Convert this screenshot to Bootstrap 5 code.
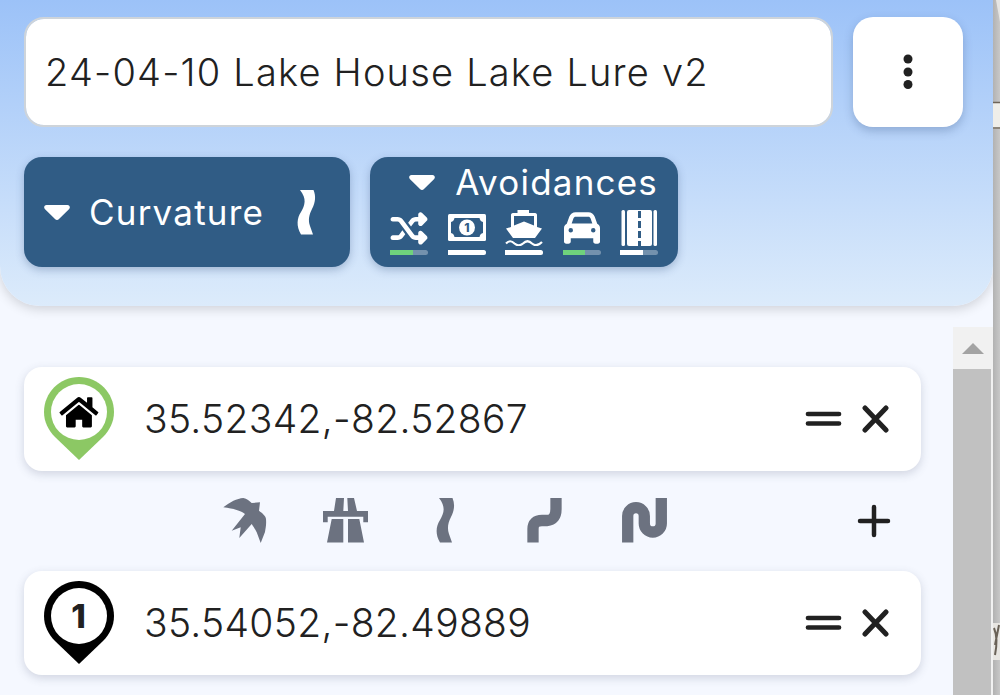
<!DOCTYPE html>
<html lang="en">
<head>
<meta charset="utf-8">
<title>Route planner</title>
<link rel="stylesheet" href="https://cdn.jsdelivr.net/npm/bootstrap@5.3.0/dist/css/bootstrap.min.css">
<script src="https://cdn.jsdelivr.net/npm/bootstrap@5.3.0/dist/js/bootstrap.bundle.min.js"></script>
<style>
html,body{height:695px;overflow:hidden;background:#c4c4c4;}
body{font-family:"Inter","Liberation Sans",sans-serif;color:#212121;}
.shell{height:695px;}
.sidepanel{width:993px;height:695px;background:#f5f8ff;flex:none;}
.mapstrip{width:7px;height:695px;flex:none;display:block;}
.headbox{height:306px;flex:none;padding:17px 30px 0 24px;background:linear-gradient(180deg,#9cc2f8 0%,#dcebfb 100%);border-radius:0 0 40px 40px;box-shadow:0 3px 12px rgba(0,0,0,.16);}
.headrow{column-gap:20px;}
.headrow + .headrow{margin-top:30px;}
.titlefield.form-control{height:110px;flex:1 1 auto;width:auto;min-width:0;border:2px solid #ced4da;border-radius:20px;font-size:38px;letter-spacing:1.2px;padding:0 19px;color:#212121;font-weight:300;}
.kebabbtn.btn{width:110px;height:110px;flex:none;background:#fff;border:0;border-radius:20px;box-shadow:0 4px 10px rgba(40,70,120,.28);padding:0;}
.routebtn.btn{height:110px;background:#305c85;color:#fff;border:0;border-radius:18px;box-shadow:0 3px 8px rgba(40,70,120,.3);padding:0;font-size:35px;font-weight:400;letter-spacing:1.2px;}
.curvebtn.btn{width:326px;padding:0 20px;}
.curvelabel{margin-left:19px;}
.curveglyph{margin-right:14px;}
.avoidbtn.btn{width:308px;padding:9px 20px 0;line-height:32px;}
.avoidlabel{margin-left:20px;}
.avoidrow{margin-top:12px;}
.avoidcell{width:38px;}
.meter.progress{height:5px;background:#7391ad;border-radius:0 3px 3px 0;margin-top:4px;}
.meter .progress-bar{background:#fff;}
.meter .progress-bar.okbar{background:#6fd27c;}
.scrollwrap{min-height:0;}
.legs{padding:61px 32px 0 24px;width:953px;flex:none;}
.pointcard.card{height:104px;border:0;border-radius:18px;box-shadow:0 3px 10px rgba(60,70,100,.2);padding:10px 32px 0 20px;}
.coordtext{font-size:39px;line-height:84px;margin-left:30px;font-weight:300;letter-spacing:.3px;}
.rowtools{margin-top:26px;}
.legrow{height:100px;padding-left:171px;}
.legbtn{width:100px;}
.addglyph{margin-right:30px;}
.fakebar{width:40px;margin-top:21px;background:#f1f1f1;flex:none;}
.fakebar-up{height:42px;}
.fakebar-thumb{flex:1 1 auto;background:#c1c1c1;margin-right:2px;}
</style>
</head>
<body>
<div class="shell d-flex">
  <div class="sidepanel d-flex flex-column">
    <header class="headbox">
      <div class="headrow d-flex">
        <input class="titlefield form-control" type="text" value="24-04-10 Lake House Lake Lure v2" aria-label="Route name">
        <button class="kebabbtn btn d-flex align-items-center justify-content-center" type="button" aria-label="Menu">
          <svg width="10" height="36" viewBox="0 0 10 36" fill="#212121"><circle cx="5" cy="5" r="4.5"/><circle cx="5" cy="18" r="4.5"/><circle cx="5" cy="30.5" r="4.5"/></svg>
        </button>
      </div>
      <div class="headrow d-flex">
        <button class="routebtn curvebtn btn d-flex align-items-center" type="button">
          <svg width="26" height="15" viewBox="0 0 26 15" fill="#fff"><path d="M2.5 0H23.5C25.6 0 26.6 2.4 25.2 3.9L15 14C13.9 15.2 12.1 15.2 11 14L.8 3.9C-.6 2.4.4 0 2.5 0Z"/></svg>
          <span class="curvelabel">Curvature</span>
          <svg class="curveglyph ms-auto" width="20" height="45" viewBox="13 0 20 45" fill="#fff"><path d="M17 0H30.5C33 6 32.5 12 29 19C26 25 25 30 27 36L30 44.5H18C13 36 14 28 18 22C22 15 24 9 17 0Z"/></svg>
        </button>
        <button class="routebtn avoidbtn btn d-flex flex-column" type="button">
          <span class="d-flex align-items-center justify-content-end w-100">
            <svg width="26" height="15" viewBox="0 0 26 15" fill="#fff"><path d="M2.5 0H23.5C25.6 0 26.6 2.4 25.2 3.9L15 14C13.9 15.2 12.1 15.2 11 14L.8 3.9C-.6 2.4.4 0 2.5 0Z"/></svg>
            <span class="avoidlabel">Avoidances</span>
          </span>
          <span class="avoidrow d-flex justify-content-between w-100">
            <span class="avoidcell d-block">
              <svg class="d-block" width="38" height="36" viewBox="0 0 512 500" fill="#fff"><path d="M403.8 34.4c12-5 25.7-2.2 34.9 6.9l64 64c6 6 9.4 14.1 9.4 22.6s-3.4 16.6-9.4 22.6l-64 64c-9.2 9.2-22.9 11.9-34.9 6.9s-19.8-16.6-19.8-29.6V160H352c-10.1 0-19.6 4.7-25.6 12.8L284 229.3 244 176l31.2-41.6C293.3 110.2 321.8 96 352 96h32V64c0-12.9 7.8-24.6 19.8-29.6zM164 282.7L204 336l-31.2 41.6C154.7 401.8 126.2 416 96 416H32c-17.7 0-32-14.3-32-32s14.3-32 32-32H96c10.1 0 19.6-4.7 25.6-12.8L164 282.7zm274.6 188c-9.2 9.2-22.9 11.9-34.9 6.9s-19.8-16.6-19.8-29.6V416H352c-30.2 0-58.7-14.2-76.8-38.4L121.6 172.8c-6-8.1-15.5-12.8-25.6-12.8H32c-17.7 0-32-14.3-32-32s14.3-32 32-32H96c30.2 0 58.7 14.2 76.8 38.4L326.4 339.2c6 8.1 15.5 12.8 25.6 12.8h32V320c0-12.9 7.8-24.6 19.8-29.6s25.7-2.2 34.9 6.9l64 64c6 6 9.4 14.1 9.4 22.6s-3.4 16.6-9.4 22.6l-64 64z"/></svg>
              <span class="meter progress d-flex"><span class="progress-bar okbar" style="width:60%"></span></span>
            </span>
            <span class="avoidcell d-block">
              <svg class="d-block" width="38" height="36" viewBox="0 0 38 36"><rect x="0" y="4" width="38" height="27" rx="1.5" fill="#fff"/><path fill="#305c85" d="M6.5 8H31.5C32 10.5 33 11.5 35 12V23C33 23.5 32 24.5 31.5 27H6.5C6 24.5 5 23.5 3 23V12C5 11.5 6 10.5 6.5 8Z"/><circle cx="19" cy="17.5" r="8" fill="#fff"/><text x="19" y="22" text-anchor="middle" font-size="12" font-weight="800" fill="#305c85" font-family="Inter,sans-serif" letter-spacing="0">1</text></svg>
              <span class="meter progress d-flex"><span class="progress-bar" style="width:100%"></span></span>
            </span>
            <span class="avoidcell d-block">
              <svg class="d-block" width="38" height="36" viewBox="0 0 38 36"><path fill="#fff" d="M12.5 0H24V3H30C31.5 3 32 4 32 5V17L37 18.5L30 28H8L1 18.5L6 17V5C6 4 6.5 3 8 3H12.5Z"/><path fill="#305c85" d="M9 6H29V15.5L19 11.5L9 15.5Z"/><path d="M1 33.5C4 30.5 6.5 30.5 9.5 33.5C12.5 36 15 36 18 33.5C21 30.5 24 30.5 27 33.5C30 36 33 36 37 32" fill="none" stroke="#fff" stroke-width="2.2"/></svg>
              <span class="meter progress d-flex"><span class="progress-bar" style="width:100%"></span></span>
            </span>
            <span class="avoidcell d-block">
              <svg class="d-block" width="38" height="36" viewBox="-14 0 540 512" fill="#fff"><path d="M135.2 117.4L109.1 192H402.9l-26.1-74.6C372.3 104.6 360.2 96 346.6 96H165.4c-13.6 0-25.7 8.6-30.2 21.4zM39.6 196.8L74.8 96.3C88.3 57.8 124.6 32 165.4 32H346.6c40.8 0 77.1 25.8 90.6 64.3l35.2 100.5c23.2 9.6 39.6 32.5 39.6 59.2V400v48c0 17.7-14.3 32-32 32H448c-17.7 0-32-14.3-32-32V400H96v48c0 17.7-14.3 32-32 32H32c-17.7 0-32-14.3-32-32V400 256c0-26.7 16.4-49.6 39.6-59.2zM128 288a32 32 0 1 0 -64 0 32 32 0 1 0 64 0zm288 32a32 32 0 1 0 0-64 32 32 0 1 0 0 64z"/></svg>
              <span class="meter progress d-flex"><span class="progress-bar okbar" style="width:60%"></span></span>
            </span>
            <span class="avoidcell d-block">
              <svg class="d-block" width="38" height="36" viewBox="0 0 38 36"><rect x="1.5" y="0" width="3.5" height="36" rx="1.5" fill="#fff"/><rect x="33.5" y="0" width="3.5" height="36" rx="1.5" fill="#fff"/><rect x="7" y="0" width="25" height="36" rx="2" fill="#fff"/><path d="M19.5 1V36" stroke="#305c85" stroke-width="3" stroke-dasharray="7 3"/></svg>
              <span class="meter progress d-flex"><span class="progress-bar" style="width:60%"></span></span>
            </span>
          </span>
        </button>
      </div>
    </header>
    <div class="scrollwrap d-flex flex-grow-1 overflow-hidden">
      <div class="legs">
        <div class="pointcard card flex-row">
          <svg width="70" height="83" viewBox="0 0 70 83"><path fill="#8cc864" d="M35 0C54.3 0 70 15.7 70 35C70 45 65.5 53.5 59 60L35 83L11 60C4.5 53.5 0 45 0 35C0 15.7 15.7 0 35 0Z"/><circle cx="35" cy="35" r="28" fill="#fff"/><g transform="translate(15.5 18) scale(.0675)"><path d="M280.37 148.26L96 300.11V464a16 16 0 0 0 16 16l112.06-.29a16 16 0 0 0 15.92-16V368h96v95.64a16 16 0 0 0 16 16.05L464 480a16 16 0 0 0 16-16V300L295.67 148.26a12.19 12.19 0 0 0-15.3 0zM571.6 251.47L488 182.56V44.05a12 12 0 0 0-12-12h-56a12 12 0 0 0-12 12v72.61L318.47 43a48 48 0 0 0-61 0L4.34 251.47a12 12 0 0 0-1.6 16.9l25.5 31A12 12 0 0 0 45.15 301l235.22-193.74a12.19 12.19 0 0 1 15.3 0L530.9 301a12 12 0 0 0 16.9-1.6l25.5-31a12 12 0 0 0-1.7-16.93z"/></g></svg>
          <span class="coordtext">35.52342,-82.52867</span>
          <svg class="rowtools ms-auto" width="85" height="32" viewBox="0 0 85 32" fill="none" stroke="#212121" stroke-linecap="round"><path stroke-width="4.7" d="M4 11H35M4 20.5H35"/><path stroke-width="5" d="M61 5L82 27M82 5L61 27"/></svg>
        </div>
        <div class="legrow d-flex align-items-center">
          <span class="legbtn d-flex justify-content-center"><svg width="46" height="46" viewBox="0 0 46 46" fill="#6c7280"><path d="M1.3 9.3C8 4 15 .5 21.3 0C25 .5 27.500 3 29.7 5L38 4.3L37 12.7C40 15 44 18 44 21C44.5 27 43.5 30 43 34L38.7 45L34.7 34.3C33 31 31 28 29.7 26L17.3 40L18.7 29.3L9.7 32.7L23 16C19 12.5 11 10.5 1.3 9.3Z"/></svg></span>
          <span class="legbtn d-flex justify-content-center"><svg width="46" height="46" viewBox="0 0 46 46" fill="#6c7280"><path d="M14 0H22L21.3 13H12ZM25.3 0H32L35 13H26ZM1 13H46V24.3H41.3V18.7H5.7V24.3H1ZM9.7 21H21.3V44.5H5ZM26 21H37.3L42 44.5H26Z"/></svg></span>
          <span class="legbtn d-flex justify-content-center"><svg width="46" height="46" viewBox="0 0 46 46" fill="#6c7280"><path d="M17 0H30.5C33 6 32.5 12 29 19C26 25 25 30 27 36L30 44.5H18C13 36 14 28 18 22C22 15 24 9 17 0Z"/></svg></span>
          <span class="legbtn d-flex justify-content-center"><svg width="46" height="46" viewBox="0 0 46 46" fill="none" stroke="#6c7280" stroke-width="11.3"><path d="M11 44.5V31Q11 22.5 20 22.5H25Q34 22 34 11V0"/></svg></span>
          <span class="legbtn d-flex justify-content-center"><svg width="46" height="46" viewBox="0 0 46 46" fill="none" stroke="#6c7280" stroke-width="11.3"><path d="M5.7 44.5V18A8.3 8.3 0 0 1 22.3 18V25.500A8.5 8.5 0 0 0 39.3 25.5V0"/></svg></span>
          <svg class="addglyph ms-auto" width="34" height="34" viewBox="0 0 34 34" fill="none" stroke="#212121" stroke-width="4.5" stroke-linecap="round"><path d="M17 3V31M3 17H31"/></svg>
        </div>
        <div class="pointcard card flex-row">
          <svg width="70" height="83" viewBox="0 0 70 83"><path d="M35 0C54.3 0 70 15.7 70 35C70 45 65.5 53.5 59 60L35 83L11 60C4.5 53.5 0 45 0 35C0 15.7 15.7 0 35 0Z"/><circle cx="35" cy="35" r="28" fill="#fff"/><text x="34.5" y="47" text-anchor="middle" font-size="33" font-weight="800" fill="#212121" font-family="Inter,sans-serif">1</text></svg>
          <span class="coordtext">35.54052,-82.49889</span>
          <svg class="rowtools ms-auto" width="85" height="32" viewBox="0 0 85 32" fill="none" stroke="#212121" stroke-linecap="round"><path stroke-width="4.7" d="M4 11H35M4 20.5H35"/><path stroke-width="5" d="M61 5L82 27M82 5L61 27"/></svg>
        </div>
      </div>
      <div class="fakebar d-flex flex-column" aria-hidden="true">
        <div class="fakebar-up d-flex align-items-center justify-content-center"><svg width="22" height="11" viewBox="0 0 22 11" fill="#a3a3a3"><path d="M11 0L22 11H0Z"/></svg></div>
        <div class="fakebar-thumb"></div>
      </div>
    </div>
  </div>
  <svg class="mapstrip" viewBox="0 0 7 695" preserveAspectRatio="none" aria-hidden="true">
    <defs><linearGradient id="mg" x1="0" x2="1" y1="0" y2="0"><stop offset="0" stop-color="#b2b2b2"/><stop offset="1" stop-color="#c8c8c8"/></linearGradient></defs>
    <rect width="7" height="695" fill="url(#mg)"/>
    <path d="M3 0H7V22Z" fill="#e6e6e4"/>
    <path d="M0 103H7V129H0Z" fill="#efeee9"/>
    <path d="M0 102.5H7M0 128H7" stroke="#6e6458" stroke-width="1.5"/>
    <path d="M0 623H7V660H0Z" fill="#e8e6e2"/>
    <path d="M1 628C4 635 4 645 2 655M6 625L2 645" stroke="#6a6258" stroke-width="2" fill="none"/>
  </svg>
</div>
</body>
</html>
